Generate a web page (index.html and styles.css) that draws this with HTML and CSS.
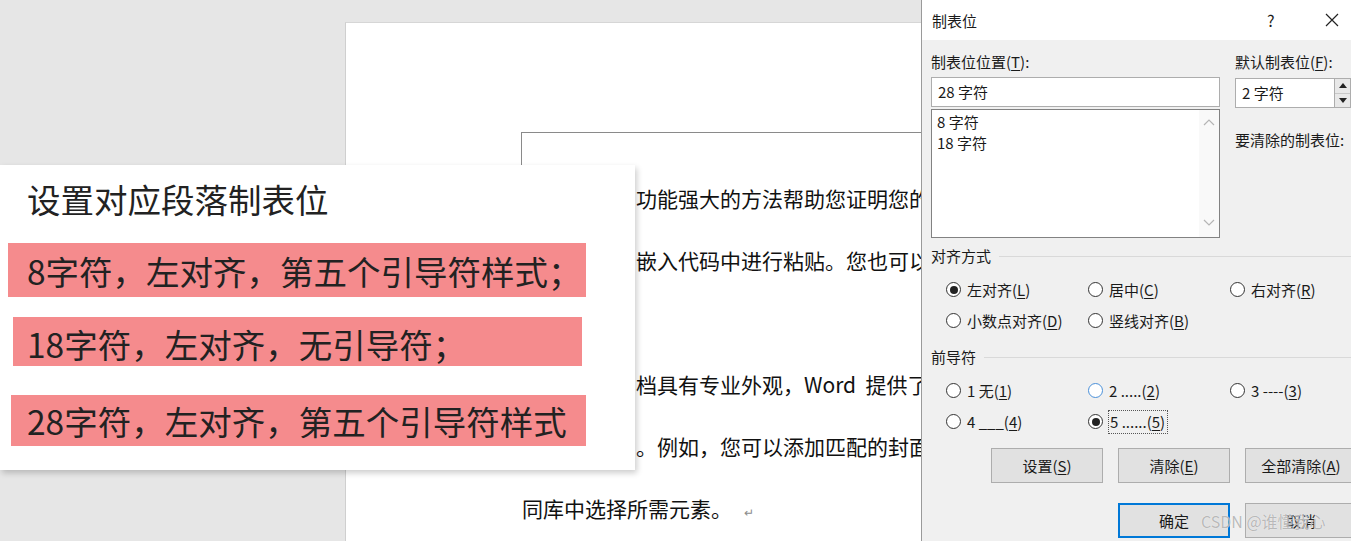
FILE: index.html
```html
<!DOCTYPE html>
<html lang="zh-CN">
<head>
  <meta charset="UTF-8" />
  <title>制表位</title>
  <link rel="stylesheet" href="styles.css">
</head>
<body>

  <div class="desk">
    <div class="page">
      <div class="marker"></div>
      <div class="line cont">功能强大的方法帮助您证明您的观点。</div>
      <div class="line cont">嵌入代码中进行粘贴。您也可以键入一个关键字。</div>
      <div class="line blank"></div>
      <div class="line cont">档具有专业外观，Word&nbsp; 提供了页眉、页脚。</div>
      <div class="line cont">。例如，您可以添加匹配的封面、页眉。</div>
      <div class="line">同库中选择所需元素。<span class="pilcrow">↵</span></div>
    </div>
  </div>

  <div class="note">
    <h2>设置对应段落制表位</h2>
    <div class="mark mark-1">8字符，左对齐，第五个引导符样式；</div>
    <div class="mark mark-2">18字符，左对齐，无引导符；</div>
    <div class="mark mark-3">28字符，左对齐，第五个引导符样式</div>
  </div>

  <div class="dialog">
    <div class="titlebar">
      <span class="title">制表位</span>
      <span class="help">?</span>
      <span class="close">
        <svg width="14" height="14" viewBox="0 0 14 14"><path d="M1 1L13 13M13 1L1 13" stroke="#222" stroke-width="1.2" fill="none"/></svg>
      </span>
    </div>

    <div class="dlg-body">
      <div class="top">
        <div class="col-left">
          <div class="label">制表位位置(<u>T</u>):</div>
          <div class="textbox pos">28 字符</div>
          <div class="listbox">
            <div class="items">
              <div>8 字符</div>
              <div>18 字符</div>
            </div>
            <div class="vscroll">
              <svg width="12" height="8" viewBox="0 0 12 8"><path d="M1 7L6 2L11 7" stroke="#b5b5b5" stroke-width="1.2" fill="none"/></svg>
              <svg width="12" height="8" viewBox="0 0 12 8"><path d="M1 1L6 6L11 1" stroke="#b5b5b5" stroke-width="1.2" fill="none"/></svg>
            </div>
          </div>
        </div>
        <div class="col-right">
          <div class="label">默认制表位(<u>F</u>):</div>
          <div class="spin">
            <div class="textbox">2 字符</div>
            <div class="spin-btns">
              <span><svg width="8" height="5" viewBox="0 0 8 5"><path d="M0 5L4 0L8 5Z" fill="#222"/></svg></span>
              <span><svg width="8" height="5" viewBox="0 0 8 5"><path d="M0 0L4 5L8 0Z" fill="#222"/></svg></span>
            </div>
          </div>
          <div class="clear-label">要清除的制表位:</div>
        </div>
      </div>

      <div class="group-head"><span>对齐方式</span><i></i></div>
      <div class="radios">
        <div class="opt"><span class="radio checked"></span>左对齐(<u>L</u>)</div>
        <div class="opt"><span class="radio"></span>居中(<u>C</u>)</div>
        <div class="opt"><span class="radio"></span>右对齐(<u>R</u>)</div>
        <div class="opt"><span class="radio"></span>小数点对齐(<u>D</u>)</div>
        <div class="opt"><span class="radio"></span>竖线对齐(<u>B</u>)</div>
      </div>

      <div class="group-head leader"><span>前导符</span><i></i></div>
      <div class="radios">
        <div class="opt"><span class="radio"></span>1 无(<u>1</u>)</div>
        <div class="opt"><span class="radio hover"></span>2 .....(<u>2</u>)</div>
        <div class="opt"><span class="radio"></span>3 ----(<u>3</u>)</div>
        <div class="opt"><span class="radio"></span>4 ___(<u>4</u>)</div>
        <div class="opt"><span class="radio checked"></span><span class="focus">5 ......(<u>5</u>)</span></div>
      </div>

      <div class="buttons first">
        <button class="btn">设置(<u>S</u>)</button>
        <button class="btn">清除(<u>E</u>)</button>
        <button class="btn">全部清除(<u>A</u>)</button>
      </div>
      <div class="buttons second">
        <button class="btn default">确定</button>
        <button class="btn">取消</button>
      </div>
    </div>

    <div class="watermark">CSDN @谁懂我心</div>
  </div>

</body>
</html>
```

FILE: styles.css
```css
* {
  box-sizing: border-box;
}

body {
  margin: 0;
  width: 1351px;
  height: 541px;
  overflow: hidden;
  position: relative;
  background-color: #e6e6e6;
  font-family: "Noto Sans CJK SC", "Noto Sans", sans-serif;
  color: #1a1a1a;
}

/* word page behind everything */

.desk {
  height: 541px;
  padding: 22px 0 0 345px;
}

.page {
  width: 620px;
  height: 519px;
  background-color: #fff;
  border-left: 1px solid #cfcfcf;
  border-top: 1px solid #d6d6d6;
  padding-top: 109px;
}

.marker {
  margin-left: 175px;
  height: 35px;
  border-top: 1px solid #8a8a8a;
  border-left: 1px solid #8a8a8a;
}

.line {
  margin-left: 176px;
  height: 62px;
  line-height: 62px;
  font-size: 21px;
  color: #111;
  white-space: nowrap;
  overflow: hidden;
}

.line.cont {
  margin-left: 290px;
}

.pilcrow {
  margin-left: 12px;
  font-size: 12px;
  color: #8c8c8c;
}

/* annotation card */

.note {
  position: absolute;
  left: 0;
  top: 165px;
  width: 635px;
  height: 305px;
  background-color: #fff;
  box-shadow: 2px 3px 6px rgba(0, 0, 0, 0.2);
  padding-top: 16px;
  display: flex;
  flex-direction: column;
}

.note h2 {
  margin: 0 0 0 27px;
  font-size: 33.5px;
  font-weight: 400;
  line-height: 36px;
  color: #222;
}

.mark {
  display: flex;
  align-items: center;
  background-color: #f58b8d;
  font-size: 33.5px;
  color: #222;
  white-space: nowrap;
}

.mark-1 {
  margin: 26px 0 0 8px;
  width: 578px;
  height: 54px;
  padding-left: 19px;
}

.mark-2 {
  margin: 20px 0 0 13px;
  width: 569px;
  height: 49px;
  padding: 3px 0 0 14px;
}

.mark-3 {
  margin: 29px 0 0 11px;
  width: 575px;
  height: 51px;
  padding-left: 16px;
}

/* tab stops dialog */

.dialog {
  position: absolute;
  left: 921px;
  top: 0;
  width: 430px;
  height: 541px;
  background-color: #f0f0f0;
  border-left: 1px solid #9a9a9a;
  font-size: 15px;
  color: #1a1a1a;
}

.titlebar {
  height: 40px;
  background-color: #fff;
  display: flex;
  align-items: center;
  padding-left: 10px;
}

.titlebar .title {
  flex: 1;
}

.titlebar .help {
  width: 20px;
  margin-right: 38px;
  font-size: 16px;
}

.titlebar .close {
  width: 20px;
  margin-right: 6px;
  display: flex;
}

.dlg-body {
  padding: 12px 0 0 9px;
}

u {
  text-decoration-thickness: 1px;
  text-underline-offset: 2px;
}

.top {
  display: flex;
  gap: 15px;
}

.col-left {
  width: 290px;
}

.col-right {
  flex: 1;
}

.label {
  height: 20px;
  line-height: 20px;
}

.textbox {
  height: 30px;
  line-height: 28px;
  padding-left: 6px;
  background-color: #fff;
  border: 1px solid #adadad;
}

.textbox.pos {
  margin-top: 5px;
}

.listbox {
  margin-top: 2px;
  height: 129px;
  display: flex;
  background-color: #fff;
  border: 1px solid #828282;
}

.items {
  flex: 1;
  padding: 1px 0 0 5px;
  line-height: 21px;
}

.vscroll {
  width: 20px;
  background-color: #f9f9f9;
  display: flex;
  flex-direction: column;
  justify-content: space-between;
  align-items: center;
  padding: 8px 0 10px;
}

.spin {
  margin-top: 6px;
  display: flex;
}

.spin .textbox {
  width: 100px;
  line-height: 28px;
}

.spin-btns {
  width: 16px;
  height: 30px;
  display: flex;
  flex-direction: column;
  border: 1px solid #adadad;
  border-left: 0;
}

.spin-btns span {
  flex: 1;
  display: flex;
  align-items: center;
  justify-content: center;
  background-color: #e8e8e8;
}

.spin-btns span + span {
  border-top: 1px solid #c8c8c8;
}

.clear-label {
  margin-top: 22px;
  height: 20px;
  line-height: 20px;
}

.group-head {
  margin-top: 8px;
  height: 20px;
  line-height: 20px;
  display: flex;
  align-items: center;
  gap: 8px;
}

.group-head.leader {
  margin-top: 11px;
}

.group-head i {
  flex: 1;
  height: 1px;
  background-color: #d9d9d9;
}

.radios {
  margin-top: 8px;
  padding-left: 15px;
  display: grid;
  grid-template-columns: 142px 142px 142px;
  grid-auto-rows: 31px;
}

.opt {
  display: flex;
  align-items: center;
  white-space: nowrap;
}

.radio {
  width: 15px;
  height: 15px;
  margin-right: 6px;
  border-radius: 50%;
  border: 1px solid #333;
  background-color: #fff;
  display: flex;
  align-items: center;
  justify-content: center;
}

.radio.checked::after {
  content: "";
  width: 8px;
  height: 8px;
  border-radius: 50%;
  background-color: #222;
}

.radio.hover {
  border-color: #4a90d9;
}

.focus {
  border: 1px dotted #555;
  padding: 1px 2px 1px 1px;
  line-height: 20px;
  margin-left: -1px;
}

.buttons {
  display: flex;
  gap: 15px;
}

.buttons.first {
  margin: 11px 0 0 60px;
}

.buttons.second {
  margin: 20px 0 0 187px;
}

.btn {
  width: 112px;
  height: 35px;
  flex-shrink: 0;
  padding: 0;
  font-family: inherit;
  font-size: 15px;
  color: #1a1a1a;
  background-color: #e1e1e1;
  border: 1px solid #adadad;
}

.btn.default {
  border: 2px solid #0078d7;
}

.watermark {
  position: absolute;
  left: 279px;
  top: 509px;
  font-size: 16px;
  line-height: 24px;
  color: rgba(140, 140, 140, 0.6);
  text-shadow: 0 0 1px #fff;
  white-space: nowrap;
}
```
